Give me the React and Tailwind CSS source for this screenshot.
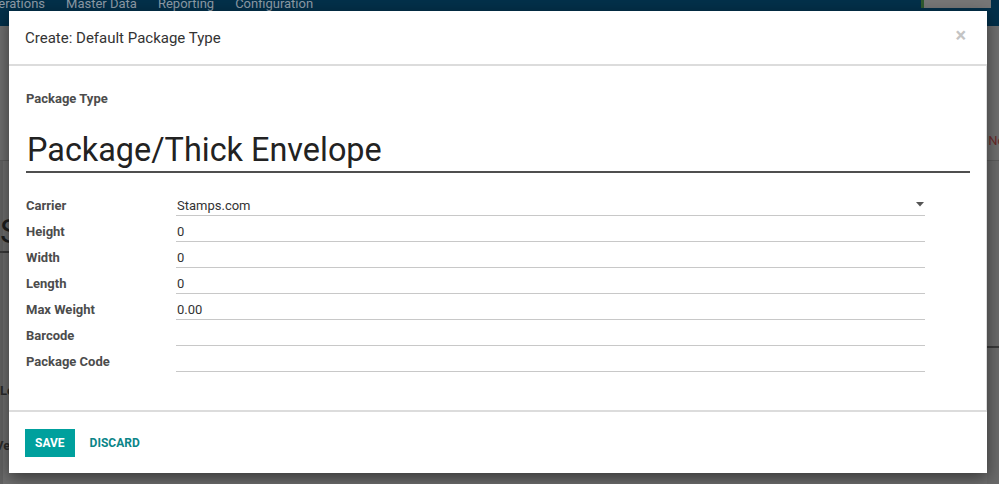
import React from 'react';

const fields = [
  { label: 'Carrier', value: 'Stamps.com', select: true },
  { label: 'Height', value: '0' },
  { label: 'Width', value: '0' },
  { label: 'Length', value: '0' },
  { label: 'Max Weight', value: '0.00' },
  { label: 'Barcode', value: '' },
  { label: 'Package Code', value: '' },
];

const Backdrop = () => (
  <div className="w-[999px] h-[484px] overflow-hidden bg-[#6f6f6f] flex flex-col">
    {/* dimmed top menu */}
    <div className="h-[26px] shrink-0 bg-[#03304a] flex items-start justify-between">
      <div className="flex gap-[21px] -mt-[6px] ml-[-18px] text-[13px] text-[#8d9ba6]">
        <span>Operations</span>
        <span>Master Data</span>
        <span>Reporting</span>
        <span>Configuration</span>
      </div>
      <div className="w-[70px] h-[8px] mr-[8px] bg-[#777] border-l-[3px] border-[#2f5a2f]" />
    </div>
    {/* dimmed control panel */}
    <div className="h-[135px] shrink-0 border-b border-[#5c5c5c] flex flex-col justify-end pb-[10px]">
      <div className="flex justify-end">
        <span className="text-[13px] text-[#6a2a2a] mr-[-17px]">Note</span>
      </div>
    </div>
    {/* dimmed form sheet */}
    <div className="flex-1 flex">
      <div className="w-[3px] bg-[#626262]" />
      <div className="flex-1 flex flex-col pt-[50px]">
        <div className="w-[60px] border-b-2 border-[#3a3a3a] -ml-[3px] text-[34px] leading-[40px] text-[#1e1e1e]">S</div>
        <div className="mt-[128px] text-[13px] font-bold text-[#2a2a2a] -ml-[3px]">Le</div>
        <div className="mt-[35px] text-[13px] font-bold text-[#2a2a2a] -ml-[8px]">Ver</div>
      </div>
      <div className="w-[12px] flex flex-col bg-[#6a6a6a]">
        <div className="mt-[185px] h-[2px] bg-[#3a3a3a]" />
      </div>
    </div>
  </div>
);

export default function App() {
  return (
    <div className="relative w-[999px] h-[484px] overflow-hidden" style={{ fontFamily: 'Roboto, "Noto Sans", sans-serif' }}>
      <Backdrop />

      <div className="absolute left-[9px] top-[11px] w-[978px] h-[462px] bg-white shadow-[0_5px_15px_rgba(0,0,0,0.5)] flex flex-col">
        <div className="h-[55px] shrink-0 flex items-center justify-between pl-[16px] pr-[20px] border-b-2 border-[#dcdcdc]">
          <h4 className="text-[15px] text-[#333] mt-[1px]">Create: Default Package Type</h4>
          <span className="text-[20px] font-bold leading-none text-[#c4c4c4] -mt-[6px] mr-[1px]">×</span>
        </div>

        <div className="flex-1 border-r border-b-2 border-[#dcdcdc] pt-[26px] pl-[17px] pr-[16px]">
          <div className="text-[13px] font-bold text-[#4c4c4c] leading-[14px]">Package Type</div>
          <div className="mt-[28px] border-b-2 border-[#4f4f4f] h-[39px] flex items-end pb-[3px]">
            <span className="text-[32.4px] leading-[36px] text-[#222] ml-[1px]">Package/Thick Envelope</span>
          </div>

          <div className="mt-[21px] flex flex-col">
            {fields.map((f) => (
              <div key={f.label} className="flex h-[26px]">
                <div className="w-[150px] h-[22px] flex items-end pb-[1px] text-[13px] font-bold text-[#4c4c4c] leading-[18px]">
                  {f.label}
                </div>
                <div className="w-[749px] h-[22px] border-b border-[#c8c8c8] flex items-end justify-between pb-0 pl-[1px] text-[13px] text-[#333] leading-[18px]">
                  <span>{f.value}</span>
                  {f.select && (
                    <svg width="8" height="5" viewBox="0 0 8 5" className="mb-[8px] mr-[1px]">
                      <path d="M0 0h8L4 4.5z" fill="#555" />
                    </svg>
                  )}
                </div>
              </div>
            ))}
          </div>
        </div>

        <div className="h-[61px] shrink-0 flex items-center gap-[15px] pl-[16px]">
          <button className="h-[28px] px-[10px] bg-[#00a09d] text-white text-[12px] font-bold uppercase">Save</button>
          <button className="text-[12px] font-bold uppercase text-[#0b8588]">Discard</button>
        </div>
      </div>
    </div>
  );
}
